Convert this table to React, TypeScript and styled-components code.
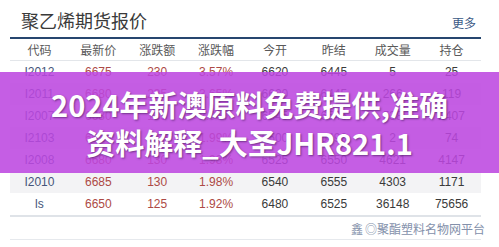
import React from 'react'
import styled, { createGlobalStyle } from 'styled-components'

const GlobalStyle = createGlobalStyle`
  html, body {
    margin: 0;
    padding: 0;
    background: #ffffff;
  }
  body {
    font-family: 'Liberation Sans', Arial, 'Noto Sans CJK SC', sans-serif;
  }
`

const Page = styled.div`
  position: relative;
  width: 499px;
  height: 247px;
  overflow: hidden;
  background: #ffffff;
`

const Panel = styled.div`
  margin-left: 10px;
  width: 471px;
`

const TitleBar = styled.div`
  height: 37px;
  display: flex;
  align-items: flex-end;
  justify-content: space-between;
  padding: 0 5px 0 11px;
  border-bottom: 2px solid #26466f;
  box-sizing: content-box;
`

const Title = styled.div`
  font-family: 'Noto Sans CJK SC', sans-serif;
  font-size: 18px;
  line-height: 24px;
  margin-bottom: 5px;
  color: #3a3a3a;
`

const More = styled.a`
  font-family: 'Noto Sans CJK SC', sans-serif;
  font-size: 12px;
  line-height: 16px;
  margin-bottom: 6px;
  color: #3b5a86;
`

const Grid = styled.div`
  display: grid;
  grid-template-columns: repeat(8, 1fr);
`

const HeadRow = styled(Grid)`
  height: 21px;
  border-bottom: 1px solid #e3e6ea;
`

const HeadCell = styled.div`
  font-family: 'Noto Sans CJK SC', sans-serif;
  font-size: 12px;
  color: #595959;
  display: flex;
  align-items: center;
  justify-content: center;
`

const Row = styled(Grid)<{ $stripe: boolean }>`
  height: 22px;
  background: ${({ $stripe }) => ($stripe ? '#f3f3f5' : '#ffffff')};
`

const Cell = styled.div<{ $tone: 'code' | 'up' | 'plain' }>`
  font-size: 12px;
  display: flex;
  align-items: center;
  justify-content: center;
  color: ${({ $tone }) => ($tone === 'code' ? '#45557a' : $tone === 'up' ? '#ad4a45' : '#3a3a3a')};
`

const Footer = styled.div`
  height: 22px;
  border-top: 2px solid #dfe3e8;
  border-bottom: 1px solid #e6e9ed;
  display: flex;
  align-items: center;
  justify-content: flex-end;
`

const Mark = styled.div`
  font-family: 'Noto Sans CJK SC', sans-serif;
  font-size: 12px;
  color: #8390aa;
  margin-right: -4px;
  display: flex;
  align-items: center;
  gap: 2px;
`

const Banner = styled.div`
  position: absolute;
  left: 0;
  right: 0;
  top: 72px;
  height: 101px;
  background: rgba(188, 70, 224, 0.87);
  display: flex;
  flex-direction: column;
  align-items: center;
  justify-content: center;
`

const BannerLine = styled.div`
  font-family: 'Noto Sans CJK SC', sans-serif;
  font-weight: 700;
  font-size: 29px;
  line-height: 38px;
  color: #ffffff;
  white-space: nowrap;
  text-shadow: 1px 1px 2px rgba(60, 20, 80, 0.6);
`

const heads = ['代码', '最新价', '涨跌额', '涨跌幅', '今开', '昨结', '成交量', '持仓']

const rows = [
  ['I2012', '6675', '230', '3.57%', '6620', '6445', '5', '25'],
  ['I2011', '6680', '235', '3.65%', '6620', '6445', '266', '119'],
  ['I2007', '6680', '135', '2.06%', '6545', '6545', '538', '2407'],
  ['I2103', '6620', '130', '1.99%', '6500', '6490', '2', '74'],
  ['I2008', '6680', '130', '1.98%', '6525', '6550', '4621', '4147'],
  ['I2010', '6685', '130', '1.98%', '6540', '6555', '4303', '1171'],
  ['ls', '6650', '125', '1.92%', '6480', '6525', '36148', '75656'],
]

const toneFor = (i: number) => (i === 0 ? 'code' : i < 4 ? 'up' : 'plain')

export default function App() {
  return (
    <Page>
      <GlobalStyle />
      <Panel>
        <TitleBar>
          <Title>聚乙烯期货报价</Title>
          <More>更多</More>
        </TitleBar>
        <HeadRow>
          {heads.map((h) => (
            <HeadCell key={h}>{h}</HeadCell>
          ))}
        </HeadRow>
        {rows.map((r, i) => (
          <Row key={r[0]} $stripe={i % 2 === 1}>
            {r.map((v, j) => (
              <Cell key={j} $tone={toneFor(j)}>
                {v}
              </Cell>
            ))}
          </Row>
        ))}
        <Footer>
          <Mark>
            <span>鑫</span>
            <span>◎聚酯塑料名物网平台</span>
          </Mark>
        </Footer>
      </Panel>
      <Banner>
        <BannerLine>2024年新澳原料免费提供,准确</BannerLine>
        <BannerLine>资料解释_大圣JHR821.1</BannerLine>
      </Banner>
    </Page>
  )
}
